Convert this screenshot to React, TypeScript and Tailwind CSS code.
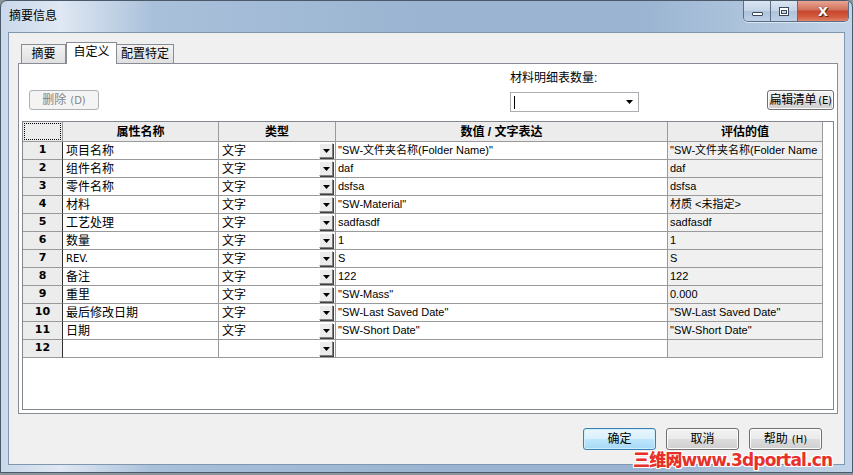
import React from "react";

const rows: { name: string; value: string; evald: string; nameLatin?: boolean }[] = [
  { name: "项目名称", value: '"SW-文件夹名称(Folder Name)"', evald: '"SW-文件夹名称(Folder Name' },
  { name: "组件名称", value: "daf", evald: "daf" },
  { name: "零件名称", value: "dsfsa", evald: "dsfsa" },
  { name: "材料", value: '"SW-Material"', evald: "材质 <未指定>" },
  { name: "工艺处理", value: "sadfasdf", evald: "sadfasdf" },
  { name: "数量", value: "1", evald: "1" },
  { name: "REV.", value: "S", evald: "S", nameLatin: true },
  { name: "备注", value: "122", evald: "122" },
  { name: "重里", value: '"SW-Mass"', evald: "0.000" },
  { name: "最后修改日期", value: '"SW-Last Saved Date"', evald: '"SW-Last Saved Date"' },
  { name: "日期", value: '"SW-Short Date"', evald: '"SW-Short Date"' },
];

const font = "font-['Liberation_Sans','Noto_Sans_CJK_SC',sans-serif]";

function DropBtn() {
  return (
    <div className="w-[14px] h-[15px] bg-[#ececec] border border-t-white border-l-white border-r-[#808080] border-b-[#808080] flex items-center justify-center shadow-[1px_1px_0_#404040]">
      <svg width="7" height="4" viewBox="0 0 7 4">
        <path d="M0 0h7L3.5 4z" fill="#000" />
      </svg>
    </div>
  );
}

function Cell({ children, className = "" }: { children?: React.ReactNode; className?: string }) {
  return (
    <div className={"h-[18px] border-r border-b border-[#9a9a9a] flex items-center overflow-hidden whitespace-nowrap " + className}>
      {children}
    </div>
  );
}

function Key({ k }: { k: string }) {
  return <span className="ml-[4px] text-[10px] font-['DejaVu_Sans',sans-serif]">({k})</span>;
}

function WinButton({ children, def = false, className = "" }: { children: React.ReactNode; def?: boolean; className?: string }) {
  return (
    <div
      className={
        "flex items-center justify-center rounded-[3px] border text-[12px] text-black whitespace-nowrap " +
        (def
          ? "border-[#3c7fb1] bg-[linear-gradient(#eaf6fd,#d9f0fc_50%,#bee6fd_50%,#a7d9f5)] shadow-[inset_0_0_0_1px_#cdeefe] "
          : "border-[#707070] bg-[linear-gradient(#f2f2f2,#ebebeb_50%,#dddddd_50%,#cfcfcf)] shadow-[inset_0_0_0_1px_#fcfcfc] ") +
        className
      }
    >
      {children}
    </div>
  );
}

export default function App() {
  return (
    <div className={"relative w-[853px] h-[475px] bg-[#8d949c] " + font}>
      <div className="w-full h-[473px] rounded-t-[7px] border border-[#4b5a6b] bg-[linear-gradient(90deg,#c9d8ea_0%,#dfe8f3_7%,#a9c0da_18%,#9ab4d1_50%,#9ab4d1_75%,#b4c9e0_92%,#c3d5e8_100%)] flex flex-col overflow-hidden">
        {/* title bar */}
        <div className="h-[31px] flex items-start shrink-0">
          <span className="ml-[8px] mt-[8px] text-[12px] text-black leading-[14px]">摘要信息</span>
          <div className="ml-auto mr-[3px] flex rounded-b-[5px] border border-t-0 border-[#5b6e84] overflow-hidden h-[21px] shadow-[0_1px_0_#dbe6f2]">
            <div className="w-[27px] border-r border-[#5b6e84] bg-[linear-gradient(#dbe5f1,#c3d3e6_50%,#aec2da_50%,#bdd0e6)] flex items-center justify-center">
              <div className="w-[11px] h-[4px] mt-[5px] bg-white border border-[#3a4a5c] rounded-[1px]" />
            </div>
            <div className="w-[27px] border-r border-[#5b6e84] bg-[linear-gradient(#dbe5f1,#c3d3e6_50%,#aec2da_50%,#bdd0e6)] flex items-center justify-center">
              <div className="w-[10px] h-[9px] border border-[#3a4a5c] bg-white flex items-center justify-center">
                <div className="w-[6px] h-[4px] border border-[#3a4a5c] bg-[#c8d6e6] mt-[1px]" />
              </div>
            </div>
            <div className="w-[50px] bg-[linear-gradient(#e8a493,#d2705a_45%,#c7462c_50%,#d45c3f_80%,#e0836a)] flex items-center justify-center">
              <span className="text-white font-bold text-[13px] leading-none font-['DejaVu_Sans',sans-serif] [text-shadow:0_0_1px_#3a1a10,1px_1px_0_#5a2a1a]">X</span>
            </div>
          </div>
        </div>

        {/* client area */}
        <div className="mx-[7px] flex-1 border border-[#8197b0] bg-[#f0f0f0] flex flex-col mb-[7px] relative">
          {/* tab strip */}
          <div className="h-[30px] flex items-end pl-[12px] pt-[8px] shrink-0">
            <div className="h-[19px] w-[45px] border border-b-0 border-[#898c95] bg-[linear-gradient(#f2f2f2,#e0e0e0)] text-[12px] flex items-center justify-center text-black leading-none">摘要</div>
            <div className="h-[22px] w-[51px] -mb-[1px] border border-b-0 border-[#898c95] bg-white text-[12px] flex items-start pt-[3px] justify-center text-black leading-none relative z-10">自定义</div>
            <div className="h-[19px] w-[57px] border border-b-0 border-l-0 border-[#898c95] bg-[linear-gradient(#f2f2f2,#e0e0e0)] text-[12px] flex items-center justify-center text-black leading-none">配置特定</div>
          </div>

          {/* panel */}
          <div className="ml-[9px] w-[820px] h-[351px] border border-[#898c95] bg-white flex flex-col shrink-0">
            {/* top controls */}
            <div className="h-[57px] flex shrink-0">
              <div className="pl-[10px] pt-[26px]">
                <div className="w-[70px] h-[20px] border border-[#adb2b5] rounded-[3px] bg-[#f4f4f4] text-[#838383] text-[12px] flex items-center justify-center whitespace-nowrap">
                  删除<Key k="D" />
                </div>
              </div>
              <div className="ml-[411px] pt-[7px] flex flex-col">
                <span className="text-[12px] leading-[14px] text-black">材料明细表数量:</span>
                <div className="mt-[7px] w-[129px] h-[20px] border border-[#abadb3] bg-white flex items-center pl-[3px] pr-[5px]">
                  <div className="w-[1px] h-[13px] bg-black" />
                  <svg className="ml-auto" width="7" height="4" viewBox="0 0 7 4">
                    <path d="M0 0h7L3.5 4z" fill="#000" />
                  </svg>
                </div>
              </div>
              <div className="ml-auto mr-[3px] pt-[26px]">
                <WinButton className="w-[67px] h-[20px] tracking-[-0.3px]">
                  扁辑清单<span className="ml-[2px] text-[10px] font-['DejaVu_Sans',sans-serif]">(E)</span>
                </WinButton>
              </div>
            </div>

            {/* table box */}
            <div className="ml-[3px] w-[812px] h-[289px] border border-[#828790] bg-white">
              <div className="grid grid-cols-[40px_156px_117px_332px_155px] text-[11px] text-black">
                {/* header */}
                <div className="h-[20px] border-r border-b border-[#9a9a9a] bg-[#ececec] p-[1px]">
                  <div className="w-full h-full border border-dotted border-black" />
                </div>
                <div className="h-[20px] border-r border-b border-[#9a9a9a] bg-[#ececec] flex items-center justify-center font-bold text-[12px]">属性名称</div>
                <div className="h-[20px] border-r border-b border-[#9a9a9a] bg-[#ececec] flex items-center justify-center font-bold text-[12px]">类型</div>
                <div className="h-[20px] border-r border-b border-[#9a9a9a] bg-[#ececec] flex items-center justify-center font-bold text-[12px]">数值 / 文字表达</div>
                <div className="h-[20px] border-r border-b border-[#9a9a9a] bg-[#ececec] flex items-center justify-center font-bold text-[12px]">评估的值</div>

                {rows.map((r, i) => (
                  <React.Fragment key={i}>
                    <Cell className="bg-[#ececec] justify-center font-bold border-r-[#303030] font-['DejaVu_Sans',sans-serif] text-[11px]">{i + 1}</Cell>
                    <Cell className={"pl-[3px] " + (r.nameLatin ? "text-[10px] font-['DejaVu_Sans',sans-serif]" : "text-[12px]")}>{r.name}</Cell>
                    <Cell className="pl-[3px] text-[12px] pr-[1px]">
                      <span>文字</span>
                      <div className="ml-auto mr-[1px]">
                        <DropBtn />
                      </div>
                    </Cell>
                    <Cell className="pl-[2px]">{r.value}</Cell>
                    <Cell className="pl-[2px] bg-[#f0f0f0]">{r.evald}</Cell>
                  </React.Fragment>
                ))}
                <Cell className="bg-[#ececec] justify-center font-bold border-r-[#303030] font-['DejaVu_Sans',sans-serif] text-[11px]">12</Cell>
                <Cell />
                <Cell className="pr-[1px]">
                  <div className="ml-auto mr-[1px]">
                    <DropBtn />
                  </div>
                </Cell>
                <Cell />
                <Cell className="bg-[#f0f0f0]" />
              </div>
            </div>
          </div>

          {/* bottom buttons */}
          <div className="flex justify-end gap-[10px] pr-[22px] pt-[14px]">
            <WinButton def className="w-[73px] h-[22px]">确定</WinButton>
            <WinButton className="w-[73px] h-[22px]">取消</WinButton>
            <WinButton className="w-[73px] h-[22px]">
              帮助<Key k="H" />
            </WinButton>
          </div>
        </div>
      </div>

      {/* watermark */}
      <div className="absolute left-[633px] top-[449px] text-[17px] leading-[20px] font-black text-[#e8302a] font-['DejaVu_Sans','Noto_Sans_CJK_SC',sans-serif] tracking-[-0.8px] [text-shadow:1px_0_0_#fff,-1px_0_0_#fff,0_1px_0_#fff,0_-1px_0_#fff,1px_1px_0_#fff,-1px_-1px_0_#fff,1px_-1px_0_#fff,-1px_1px_0_#fff]">
        <span className="font-['Noto_Sans_CJK_SC',sans-serif]">三维网</span>www.3dportal.cn
      </div>
    </div>
  );
}
